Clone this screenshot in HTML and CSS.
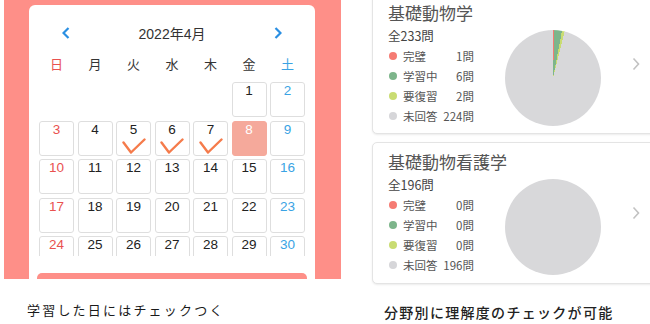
FILE: index.html
```html
<!DOCTYPE html>
<html>
<head>
    <meta charset="utf-8" />
    <title>学習カレンダー</title>
    <link rel="stylesheet" href="styles.css">
</head>
<body>
    <div class="page">
        <div class="leftCol">
            <div class="pinkPanel">
                <div class="calCard">
                    <div class="calHead">
                        <svg width="8" height="12" viewBox="0 0 8 12"><polyline points="6.5,1 1.5,6 6.5,11" fill="none" stroke="#2a8fe2" stroke-width="2.2"/></svg>
                        <span>2022年4月</span>
                        <svg width="8" height="12" viewBox="0 0 8 12"><polyline points="1.5,1 6.5,6 1.5,11" fill="none" stroke="#2a8fe2" stroke-width="2.2"/></svg>
                    </div>
                    <div class="week">
                        <span class="sun">日</span>
                        <span>月</span>
                        <span>火</span>
                        <span>水</span>
                        <span>木</span>
                        <span>金</span>
                        <span class="sat">土</span>
                    </div>
                    <div class="gridWrap">
                        <div class="grid" id="grid"></div>
                    </div>
                    <div class="bottomBar"></div>
                </div>
            </div>
            <p class="caption capLeft">学習した日にはチェックつく</p>
        </div>
        <div class="rightCol">
            <div class="card">
                <div class="info">
                    <h3>基礎動物学</h3>
                    <p class="sum">全233問</p>
                    <ul class="legend">
                        <li><i class="dot red"></i><span>完璧</span><b>1問</b></li>
                        <li><i class="dot green"></i><span>学習中</span><b>6問</b></li>
                        <li><i class="dot yellow"></i><span>要復習</span><b>2問</b></li>
                        <li><i class="dot gray"></i><span>未回答</span><b>224問</b></li>
                    </ul>
                </div>
                <div class="pie pie1"></div>
                <svg class="arrow" width="8" height="14" viewBox="0 0 8 14"><polyline points="1.5,1.5 6.5,7 1.5,12.5" fill="none" stroke="#c2c2c2" stroke-width="1.6"/></svg>
            </div>
            <div class="card card2">
                <div class="info">
                    <h3>基礎動物看護学</h3>
                    <p class="sum">全196問</p>
                    <ul class="legend">
                        <li><i class="dot red"></i><span>完璧</span><b>0問</b></li>
                        <li><i class="dot green"></i><span>学習中</span><b>0問</b></li>
                        <li><i class="dot yellow"></i><span>要復習</span><b>0問</b></li>
                        <li><i class="dot gray"></i><span>未回答</span><b>196問</b></li>
                    </ul>
                </div>
                <div class="pie pie2"></div>
                <svg class="arrow" width="8" height="14" viewBox="0 0 8 14"><polyline points="1.5,1.5 6.5,7 1.5,12.5" fill="none" stroke="#c2c2c2" stroke-width="1.6"/></svg>
            </div>
            <p class="caption capRight">分野別に理解度のチェックが可能</p>
        </div>
    </div>
    <script>
        (function() {
            let grid = document.getElementById("grid"),
                done = [5, 6, 7],      // 学習した日
                today = 8,
                html = "";
            for(let i = 0; i < 5; i++) {
                html += '<div class="day empty"></div>';
            }
            for(let d = 1; d <= 30; d++) {
                let col = (d + 4) % 7,
                    cls = "day";
                if(col === 0) cls += " sun";
                if(col === 6) cls += " sat";
                if(d === today) cls += " today";
                html += '<div class="' + cls + '"><span>' + d + '</span>';
                if(done.indexOf(d) > -1) {
                    html += '<svg width="24" height="17" viewBox="0 0 24 17"><polyline points="1.5,4.5 9,14.5 22.5,1.5" fill="none" stroke="#f57b4b" stroke-width="2.4" stroke-linecap="round" stroke-linejoin="round"/></svg>';
                }
                html += '</div>';
            }
            grid.innerHTML = html;
        })()
    </script>
</body>
</html>
```

FILE: styles.css
```css
body,p,h3,ul{
    margin: 0;
}
ul{
    padding: 0;
    list-style: none;
}
body{
    width: 650px;
    height: 324px;
    overflow: hidden;
    background: #fff;
    font-family: "Liberation Sans", "Noto Sans CJK JP", sans-serif;
    color: #333;
}
.page{
    display: flex;
}
.leftCol{
    width: 360px;
    flex-shrink: 0;
}
.pinkPanel{
    margin-left: 4px;
    width: 337px;
    height: 279px;
    box-sizing: border-box;
    padding: 5px 26px 0 25px;
    background: #fe8f88;
}
.calCard{
    height: 274px;
    box-sizing: border-box;
    padding: 0 10px;
    background: #fff;
    border-radius: 6px 6px 0 0;
    overflow: hidden;
}
.calHead{
    display: flex;
    justify-content: space-between;
    align-items: center;
    margin-top: 18px;
    padding: 0 23px;
    height: 20px;
    font-size: 14px;
    color: #333;
}
.calHead svg{
    display: block;
}
.week{
    display: grid;
    grid-template-columns: repeat(7, 35px);
    column-gap: 3.5px;
    margin-top: 11px;
    height: 20px;
    line-height: 20px;
    font-size: 13px;
    text-align: center;
    color: #333;
    font-family: "Noto Sans CJK JP", sans-serif;
}
.week .sun{
    color: #e9514f;
}
.week .sat{
    color: #3aa3e4;
}
.gridWrap{
    margin-top: 8px;
    height: 174px;
    overflow: hidden;
}
.grid{
    display: grid;
    grid-template-columns: repeat(7, 35px);
    grid-auto-rows: 35px;
    gap: 3.5px;
}
.day{
    box-sizing: border-box;
    border: 1px solid #dedede;
    border-radius: 3px;
    text-align: center;
    font-size: 13.5px;
    line-height: 16px;
    color: #222;
}
.day span{
    display: block;
}
.day svg{
    display: block;
    margin: 0 auto;
}
.day.empty{
    border: 0;
}
.day.sun{
    color: #e9514f;
}
.day.sat{
    color: #3aa3e4;
}
.day.today{
    border-color: #f5a99b;
    background: #f5a99b;
    color: #fff;
}
.bottomBar{
    margin: 17px -2px 0;
    height: 10px;
    background: #fe8f88;
    border-radius: 5px 5px 0 0;
}
.caption{
    height: 20px;
    line-height: 20px;
    font-family: "Noto Sans CJK JP", sans-serif;
    color: #1a1a1a;
    white-space: nowrap;
}
.capLeft{
    margin: 21px 0 0 27px;
    font-size: 13px;
    letter-spacing: 2.2px;
}
.capRight{
    margin: 18px 0 0 12px;
    font-size: 14px;
    letter-spacing: 1.3px;
    font-weight: 500;
    color: #222;
}
.rightCol{
    flex: 1;
    margin-top: -7px;
    padding-left: 12px;
}
.card{
    display: flex;
    align-items: flex-start;
    height: 141px;
    width: 300px;
    box-sizing: border-box;
    padding-left: 15px;
    border: 1px solid #e4e4e4;
    border-radius: 5px;
    box-shadow: 0 1px 2px rgba(0,0,0,0.08);
    background: #fff;
}
.card2{
    margin-top: 8px;
    height: 142px;
}
.info{
    width: 117px;
    flex-shrink: 0;
    color: #555;
    font-family: "Noto Sans CJK JP", sans-serif;
}
.info h3{
    margin-top: 8px;
    height: 22px;
    line-height: 22px;
    font-size: 17px;
    font-weight: 400;
    color: #555;
    white-space: nowrap;
}
.sum{
    margin-top: 4px;
    height: 16px;
    line-height: 16px;
    font-size: 12.5px;
    color: #444;
}
.legend{
    margin-top: 2px;
    width: 86px;
}
.legend li{
    display: flex;
    align-items: center;
    height: 20px;
    font-size: 11.5px;
    color: #555;
}
.legend span{
    flex: 1;
    margin-left: 6px;
}
.legend b{
    font-weight: 400;
}
.dot{
    display: block;
    width: 8px;
    height: 8px;
    margin-left: 1px;
    border-radius: 50%;
}
.dot.red{
    background: #f57b73;
}
.dot.green{
    background: #7db58b;
}
.dot.yellow{
    background: #c9dc72;
}
.dot.gray{
    background: #d6d6d9;
}
.pie{
    flex-shrink: 0;
    width: 96px;
    height: 96px;
    margin-top: 36px;
    border-radius: 50%;
    background: #d8d8da;
}
.pie1{
    background: conic-gradient(#f57b73 0deg 1.55deg, #7db58b 1.55deg 10.8deg, #c9dc72 10.8deg 13.9deg, #d8d8da 13.9deg 360deg);
}
.arrow{
    flex-shrink: 0;
    margin: 63px 0 0 31px;
}
```
